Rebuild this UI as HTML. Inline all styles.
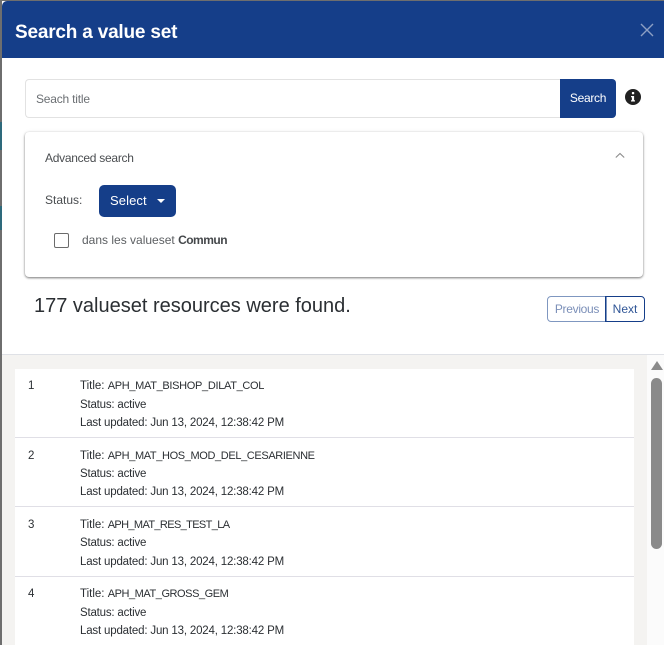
<!DOCTYPE html>
<html><head><meta charset="utf-8">
<style>
html,body{margin:0;padding:0;width:664px;height:645px;overflow:hidden;background:#fff;font-family:"Liberation Sans",sans-serif;color:#212529}
.a{position:absolute;white-space:nowrap}
.t{font-size:11.5px;line-height:16px;color:#2b2f33;margin-top:1px}
.l{letter-spacing:-.18px}
.s{letter-spacing:-.2px}
.v{font-size:11px}
.b{background:#fff;left:15px;width:619px;position:absolute}
.sep{position:absolute;left:15px;width:619px;height:1px;background:#e0dfe6}
</style></head><body>
<div class="a" style="left:0;top:0;width:2px;height:645px;background:#6e6e6e"></div>
<div class="a" style="left:0;top:0;width:664px;height:1px;background:#6e6e6e"></div>
<div class="a" style="left:0;top:122px;width:2px;height:28px;background:#2e6a7c"></div>
<div class="a" style="left:0;top:206px;width:2px;height:24px;background:#2e6a7c"></div>
<div class="a" style="left:2px;top:1px;width:662px;height:57px;background:#153e89;border-radius:5px 0 0 0"></div>
<div class="a" style="left:15px;top:20px;font-size:19px;line-height:26px;font-weight:bold;color:#fff;letter-spacing:-.2px">Search a value set</div>
<svg class="a" style="left:640px;top:23px" width="14" height="14" viewBox="0 0 14 14"><path d="M1 1L13 13M13 1L1 13" stroke="#8d9fc4" stroke-width="1.4" fill="none"/></svg>

<div class="a" style="left:25px;top:79px;width:536px;height:37px;border:1px solid #e2e2e2;border-right:0;border-radius:4px 0 0 4px;background:#fff"></div>
<div class="a" style="left:36px;top:91px;font-size:12px;line-height:16px;color:#6b6f73;letter-spacing:-.2px">Seach title</div>
<div class="a" style="left:560px;top:79px;width:56px;height:39px;background:#153e89;border-radius:0 4px 4px 0;color:#fff;font-size:12px;line-height:39px;text-align:center;letter-spacing:-.3px">Search</div>
<svg class="a" style="left:625px;top:89px" width="16" height="16" viewBox="0 0 16 16"><circle cx="8" cy="8" r="8" fill="#212121"/><rect x="6.9" y="3" width="2.3" height="2.3" rx=".6" fill="#fff"/><path d="M6 7h3.1v4.2H10v1.3H6v-1.3h.9V8.3H6z" fill="#fff"/></svg>

<div class="a" style="left:25px;top:132px;width:618px;height:145px;background:#fff;border-radius:4px;box-shadow:0 1px 2px rgba(0,0,0,.5),0 0 4px rgba(0,0,0,.08)"></div>
<div class="a" style="left:45px;top:150px;font-size:12px;line-height:16px;color:#4a4d50;letter-spacing:-.27px">Advanced search</div>
<svg class="a" style="left:615px;top:152px" width="10" height="7" viewBox="0 0 10 7"><path d="M.8 5.5L5 1.5L9.2 5.5" stroke="#8a8a8a" stroke-width="1.1" fill="none"/></svg>
<div class="a" style="left:45px;top:192px;font-size:12px;line-height:16px;color:#4a4d50">Status:</div>
<div class="a" style="left:99px;top:185px;width:77px;height:32px;background:#153e89;border-radius:5px"></div>
<div class="a" style="left:110px;top:193px;font-size:13px;line-height:16px;color:#fff;letter-spacing:.1px">Select</div>
<div class="a" style="left:157px;top:199px;width:0;height:0;border-left:4px solid transparent;border-right:4px solid transparent;border-top:4px solid #fff"></div>
<div class="a" style="left:54px;top:233px;width:13px;height:13px;border:1px solid #6b6b6b;border-radius:2px;background:#fff"></div>
<div class="a" style="left:82px;top:232px;font-size:12px;line-height:16px;color:#5c5f62">dans les valueset <b style="color:#45484b;letter-spacing:-.5px">Commun</b></div>

<div class="a" style="left:34px;top:293px;font-size:20px;line-height:26px;color:#2b2f33">177 valueset resources were found.</div>
<div class="a" style="left:547px;top:296px;width:58px;height:24px;border:1px solid #7f97c0;border-radius:4px 0 0 4px;color:#7b8fb8;font-size:12px;line-height:25px;text-align:center;letter-spacing:-.3px">Previous</div>
<div class="a" style="left:605px;top:296px;width:38px;height:24px;border:1px solid #153e89;border-radius:0 4px 4px 0;color:#2f5596;font-size:12px;line-height:25px;text-align:center">Next</div>

<div class="a" style="left:2px;top:354px;width:662px;height:1px;background:#dfe1e6"></div>
<div class="a" style="left:2px;top:355px;width:645px;height:290px;background:#f4f3f1"></div>
<div class="a" style="left:647px;top:355px;width:17px;height:290px;background:#fbfbfb"></div>
<div class="a" style="left:651px;top:361px;width:0;height:0;border-left:6px solid transparent;border-right:6px solid transparent;border-bottom:9px solid #8a8a8a"></div>
<div class="a" style="left:651px;top:378px;width:11px;height:171px;background:#8a8a8a;border-radius:6px"></div>

<div class="b" style="top:369px;height:276px"></div>
<div class="sep" style="top:437px"></div>
<div class="sep" style="top:506px"></div>
<div class="sep" style="top:576px"></div>

<div class="a t" style="left:28px;top:377px">1</div>
<div class="a t" style="left:80px;top:377px">Title: <span class="v" style="letter-spacing:-.32px">APH_MAT_BISHOP_DILAT_COL</span></div>
<div class="a t s" style="left:80px;top:396px">Status: active</div>
<div class="a t l" style="left:80px;top:414px">Last updated: Jun 13, 2024, 12:38:42 PM</div>

<div class="a t" style="left:28px;top:447px">2</div>
<div class="a t" style="left:80px;top:447px">Title: <span class="v" style="letter-spacing:-.37px">APH_MAT_HOS_MOD_DEL_CESARIENNE</span></div>
<div class="a t s" style="left:80px;top:465px">Status: active</div>
<div class="a t l" style="left:80px;top:483px">Last updated: Jun 13, 2024, 12:38:42 PM</div>

<div class="a t" style="left:28px;top:516px">3</div>
<div class="a t" style="left:80px;top:516px">Title: <span class="v" style="letter-spacing:-.63px">APH_MAT_RES_TEST_LA</span></div>
<div class="a t s" style="left:80px;top:534px">Status: active</div>
<div class="a t l" style="left:80px;top:553px">Last updated: Jun 13, 2024, 12:38:42 PM</div>

<div class="a t" style="left:28px;top:585px">4</div>
<div class="a t" style="left:80px;top:585px">Title: <span class="v" style="letter-spacing:-.44px">APH_MAT_GROSS_GEM</span></div>
<div class="a t s" style="left:80px;top:604px">Status: active</div>
<div class="a t l" style="left:80px;top:622px">Last updated: Jun 13, 2024, 12:38:42 PM</div>
</body></html>
